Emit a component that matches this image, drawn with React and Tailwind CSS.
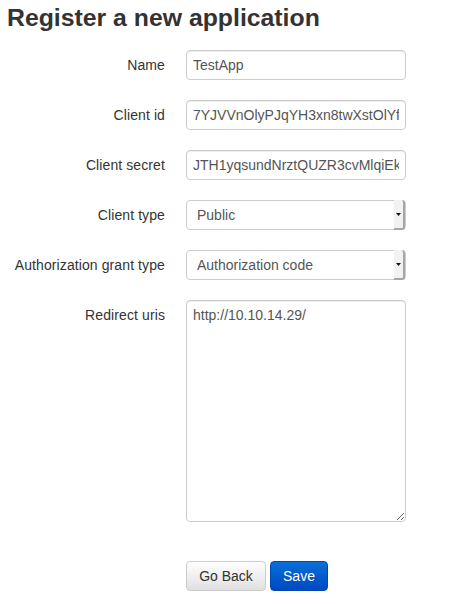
import React from 'react';

const FIELDS = [
    { label: 'Name', value: 'TestApp' },
    { label: 'Client id', value: '7YJVVnOlyPJqYH3xn8twXstOlYf0aBcD1xZ' },
    { label: 'Client secret', value: 'JTH1yqsundNrztQUZR3cvMlqiEkP9sLwQ' },
];

const SELECTS = [
    { label: 'Client type', value: 'Public', options: ['Confidential', 'Public'] },
    { label: 'Authorization grant type', value: 'Authorization code', options: ['Authorization code', 'Implicit', 'Resource owner password-based', 'Client credentials'] },
];

function Row({ label, children }) {
    return (
        <div className="flex items-center">
            <label className="w-[165px] text-right text-[14px] tracking-[0.1px] text-[#333]">{label}</label>
            <div className="ml-[21px] w-[220px]">{children}</div>
        </div>
    );
}

export default function App() {
    return (
        <div className="w-[459px] h-[604px] bg-white text-[#333] font-['Liberation_Sans',Arial,sans-serif]">
            <h3 className="pt-[4px] pl-[7px] text-[24.8px] leading-[27px] font-bold text-[#333]">Register a new application</h3>

            <form className="mt-[19px] flex flex-col gap-5">
                {FIELDS.map(f => (
                    <Row key={f.label} label={f.label}>
                        <input
                            type="text"
                            defaultValue={f.value}
                            className="w-full h-[30px] px-[6px] border border-[#ccc] rounded-[4px] text-[14px] text-[#555] outline-none shadow-[inset_0_1px_1px_rgba(0,0,0,0.075)]"
                        />
                    </Row>
                ))}

                {SELECTS.map(s => (
                    <Row key={s.label} label={s.label}>
                        <div className="relative">
                            <select
                                defaultValue={s.value}
                                className="w-full h-[30px] pl-[10px] pr-4 appearance-none border border-[#ccc] rounded-[4px] bg-white text-[14px] text-[#555] outline-none"
                            >
                                {s.options.map(o => <option key={o}>{o}</option>)}
                            </select>
                            {/* old-style native arrow */}
                            <div className="pointer-events-none absolute right-[1px] top-0 h-[30px] w-[11px] bg-[#f2f2f2] border-r-2 border-b-2 border-[#a6a6a6] rounded-r-[3px] flex items-center justify-center">
                                <svg width="5" height="3" viewBox="0 0 5 3"><path d="M0 0h5L2.5 3z" fill="#111" /></svg>
                            </div>
                        </div>
                    </Row>
                ))}

                <div className="flex items-start">
                    <label className="w-[165px] text-right text-[14px] tracking-[0.1px] text-[#333] pt-[5px]">Redirect uris</label>
                    <textarea
                        defaultValue="http://10.10.14.29/"
                        className="ml-[21px] w-[220px] h-[222px] px-[6px] py-[4px] border border-[#ccc] rounded-[4px] text-[14px] text-[#555] outline-none resize shadow-[inset_0_1px_1px_rgba(0,0,0,0.075)]"
                    />
                </div>
            </form>

            <div className="mt-[39px] ml-[186px] flex gap-[4px]">
                <button className="h-[30px] w-[80px] border border-[#ccc] rounded-[4px] bg-gradient-to-b from-white to-[#e0e0e0] text-[14px] text-[#333]">
                    Go Back
                </button>
                <button className="h-[30px] w-[58px] border border-[#0048b0] rounded-[4px] bg-gradient-to-b from-[#0c6fd8] to-[#0048c4] text-[14px] text-white">
                    Save
                </button>
            </div>
        </div>
    );
}
